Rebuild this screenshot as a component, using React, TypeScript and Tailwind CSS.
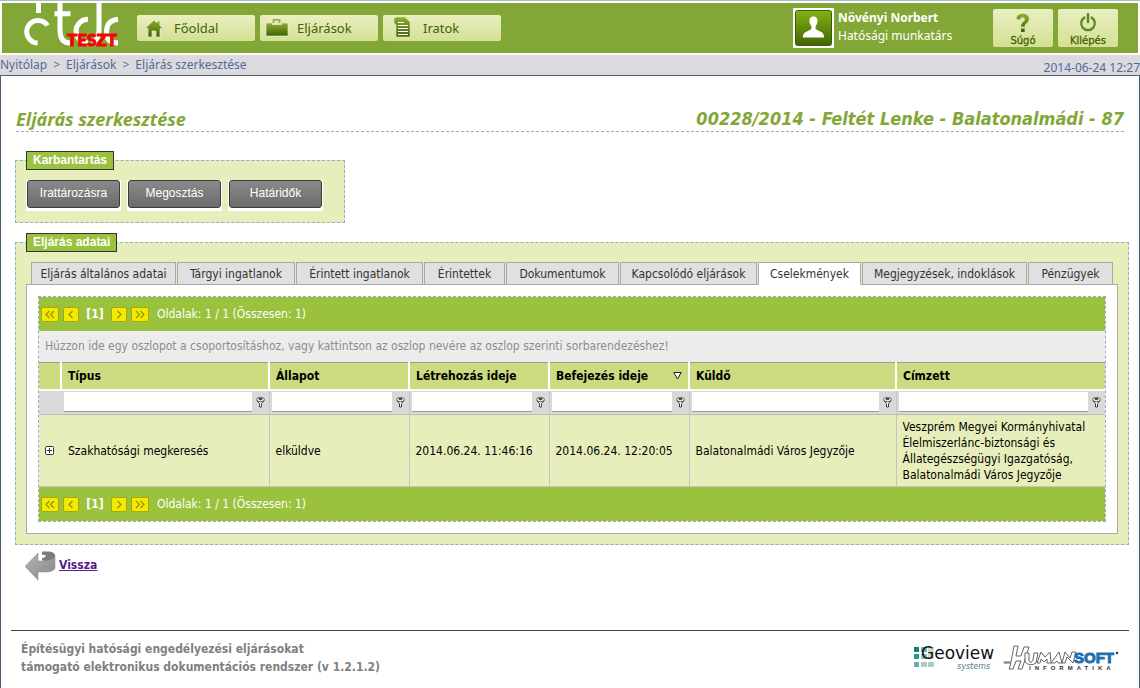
import clsx from 'clsx'
import type { ReactNode } from 'react'

const NAV_ITEMS = [
  { label: 'Főoldal', icon: <HomeIcon />, iconWidth: 'w-[34px]' },
  { label: 'Eljárások', icon: <BriefcaseIcon />, iconWidth: 'w-[34px]' },
  { label: 'Iratok', icon: <DocumentIcon />, iconWidth: 'w-[37px]' },
]

const TABS = [
  { label: 'Eljárás általános adatai', width: 'basis-[145px]' },
  { label: 'Tárgyi ingatlanok', width: 'basis-[118px]' },
  { label: 'Érintett ingatlanok', width: 'basis-[127px]' },
  { label: 'Érintettek', width: 'basis-[81px]' },
  { label: 'Dokumentumok', width: 'basis-[113px]' },
  { label: 'Kapcsolódó eljárások', width: 'basis-[137px]' },
  { label: 'Cselekmények', width: 'basis-[103px]', active: true },
  { label: 'Megjegyzések, indoklások', width: 'basis-[165px]' },
  { label: 'Pénzügyek', width: 'basis-[85px]' },
]

const COLUMNS = [
  { label: 'Típus', width: 'w-[208px]' },
  { label: 'Állapot', width: 'w-[140px]' },
  { label: 'Létrehozás ideje', width: 'w-[140px]' },
  { label: 'Befejezés ideje', width: 'w-[140px]', sorted: true },
  { label: 'Küldő', width: 'w-[207px]' },
  { label: 'Címzett', width: '' },
]

const ROW = [
  'Szakhatósági megkeresés',
  'elküldve',
  '2014.06.24. 11:46:16',
  '2014.06.24. 12:20:05',
  'Balatonalmádi Város Jegyzője',
  'Veszprém Megyei Kormányhivatal Élelmiszerlánc-biztonsági és Állategészségügyi Igazgatóság, Balatonalmádi Város Jegyzője',
]

function IconGradient({ id }: { id: string }) {
  return (
    <defs>
      <linearGradient id={id} x1="0" y1="0" x2="0" y2="1">
        <stop offset="0" stopColor="#8fae33" />
        <stop offset="1" stopColor="#3f6206" />
      </linearGradient>
    </defs>
  )
}

function HomeIcon() {
  return (
    <svg width="18" height="19" viewBox="0 0 18 19" aria-hidden="true">
      <IconGradient id="home" />
      <path
        d="M9 1 1 8.5 2.2 10 3 9.4V18h4v-6h4v6h4V9.4l.8.6L17 8.5l-2.2-2V2h-2.6v2z"
        fill="url(#home)"
        stroke="#f2f6d8"
        strokeWidth="0.6"
      />
    </svg>
  )
}

function BriefcaseIcon() {
  return (
    <svg width="24" height="19" viewBox="0 0 24 19" className="mb-[2px]" aria-hidden="true">
      <IconGradient id="briefcase" />
      <path d="M8.5 5V1.8h6V5" fill="none" stroke="#97b04a" strokeWidth="1.8" />
      <path
        d="M1 5h6.500v1.500h9V5H23v13H1z"
        fill="url(#briefcase)"
        stroke="#f2f6d8"
        strokeWidth="0.6"
      />
    </svg>
  )
}

function DocumentIcon() {
  return (
    <svg width="18" height="22" viewBox="0 0 18 22" className="mb-[2px]" aria-hidden="true">
      <IconGradient id="document" />
      <path d="M1 2 4 1h8l5 5v15H3V9L1 7z" fill="url(#document)" stroke="#dfe8b0" strokeWidth="0.6" />
      <path d="M5 6.500h6M5 9.500h10M5 12.500h10M5 15.500h10M5 18.500h10" stroke="#fff" strokeWidth="1.2" />
    </svg>
  )
}

function Logo() {
  return (
    <a href="#" className="relative block h-[50px] w-[100px] overflow-hidden" aria-label="Kezdőlap">
      <svg width="100" height="50" viewBox="1 0 100 50" fill="none" stroke="#fff" strokeWidth="5">
        <path d="M16.500 0v10" />
        <path d="M25.500 22.500A11.300 11.300 0 1 0 15.700 40" />
        <path d="M38 0v27q0 13 10 13M32.500 10.800h16" />
        <path d="M66 16.200A11.800 11.800 0 0 0 66 40" />
        <path d="M77 0v27q0 9-7 13" />
        <path d="M96 16.200q-11.500 1-11.500 12.800 0 11 11.500 11" />
      </svg>
      <span className="absolute top-[28px] left-[44px] font-['Lato'] text-[17px] leading-[18px] font-black text-[#f20505] [-webkit-text-stroke:1px_#f20505]">
        TESZT
      </span>
    </a>
  )
}

function Avatar() {
  return (
    <svg width="41" height="40" viewBox="0 0 41 40" aria-hidden="true">
      <defs>
        <linearGradient id="avatar" x1="0" y1="0" x2="0" y2="1">
          <stop offset="0" stopColor="#82b313" />
          <stop offset="1" stopColor="#426403" />
        </linearGradient>
      </defs>
      <rect width="41" height="40" rx="1" fill="#fff" />
      <rect x="2.500" y="2.500" width="36" height="35" rx="2" fill="url(#avatar)" stroke="#3d5c05" />
      <path
        d="M20.500 8.500c-3 0-4.300 2.200-4 5 .2 2.500 1.200 3.500 1.800 4.800.6 1.600.2 3-1.300 3.800-3.500 1.800-6.800 1.800-7.200 7.400h21.400c-.4-5.600-3.700-5.600-7.200-7.400-1.500-.8-1.900-2.200-1.300-3.800.6-1.300 1.600-2.300 1.800-4.800.3-2.800-1-5-4-5z"
        fill="#fff"
      />
    </svg>
  )
}

function HelpIcon() {
  return (
    <svg width="16" height="20" viewBox="0 0 16 20" aria-hidden="true">
      <IconGradient id="help" />
      <path
        d="M1.500 6C1.500 2.500 4 .8 7.500.8c4 0 6.500 2 6.500 5 0 4.200-4.300 4.400-4.300 8H6c0-5 3.800-4.800 3.800-7.600 0-1.300-1-2-2.300-2-1.400 0-2.200.8-2.300 2.500zM6 15.500h3.700V19H6z"
        fill="url(#help)"
      />
    </svg>
  )
}

function PowerIcon() {
  return (
    <svg width="18" height="19" viewBox="0 0 18 19" fill="none" stroke="#5e8220" aria-hidden="true">
      <path d="M5.500 4.500a6.800 6.800 0 1 0 7 0" strokeWidth="2.200" strokeLinecap="round" />
      <path d="M9 1v8" strokeWidth="2.400" strokeLinecap="round" />
    </svg>
  )
}

function FilterIcon() {
  return (
    <svg width="9" height="11" viewBox="0 0 9 11" aria-hidden="true">
      <path d="M.8 3.500 3.500 6.500v3.500h2V6.500l2.700-3" fill="#fff" stroke="#444" />
      <ellipse cx="4.500" cy="2.600" rx="3.900" ry="2.100" fill="#fff" stroke="#555" />
      <ellipse cx="4.500" cy="2.100" rx="2" ry="1.200" fill="#444" />
    </svg>
  )
}

function BackIcon() {
  return (
    <svg width="32" height="30" viewBox="0 0 32 30" aria-hidden="true">
      <defs>
        <linearGradient id="back" x1="0" y1="0" x2="1" y2="1">
          <stop offset="0" stopColor="#b5b5b5" />
          <stop offset="1" stopColor="#858585" />
        </linearGradient>
      </defs>
      <path d="M17 .5h5c5 0 8 1.500 8 4l-1 5-10 1-2-2V7c5 0 5-4 0-3z" fill="#7c7c7c" />
      <path
        d="M0 15.500 13 2v8h4c7 0 12-1.500 13-5.500V17c-1 3-5 4-9 4h-8v8z"
        fill="url(#back)"
        stroke="#8a8a8a"
        strokeWidth="0.5"
      />
    </svg>
  )
}

function GeoviewLogo() {
  return (
    <svg width="88" height="28" viewBox="0 0 88 28" role="img" aria-label="Geoview systems">
      <path d="M1 3h5v5H1z" fill="#12807a" />
      <path d="M1 10h5v5H1z" fill="#259a8c" />
      <path d="M8 10h6v5H8z" fill="#8cc5ba" />
      <path d="M8 3h6v5H8z" fill="#6fb5aa" />
      <path d="M15 3h6v12h-6z" fill="#c9e0c8" />
      <path d="M1 18h5v5H1z" fill="#6fa9ac" />
      <path d="M8 18h6v5H8zM15 18h6v5h-6z" fill="#aacfba" />
      <text x="8" y="15" fontFamily="DejaVu Sans" fontWeight="400" fontSize="17" fill="#111">
        Geoview
      </text>
      <text x="44" y="25" fontFamily="DejaVu Sans" fontWeight="400" fontStyle="italic" fontSize="8" fill="#55788c">
        systems
      </text>
    </svg>
  )
}

function HumansoftLogo() {
  return (
    <svg width="116" height="28" viewBox="0 0 116 28" role="img" aria-label="Humansoft Informatika">
      <g fill="#fff" stroke="#666" strokeWidth="1">
        <path d="M1 18h7l3-16h4l-2 10h5l3-9h5l-7 22h-4l3-8h-5l-3 8H6l2-6H1z" />
        <path d="M22 9h4v8q2 3 4-1l1-7h4l-2 10q-6 4-11-1z" />
        <path d="M34 19 38 8l4 5 5-5 1 11h-4v-4l-3 3-3-3-1 4z" />
        <path d="M48 19 56 8l3 11h-4l-1-2-2 2zM59 19l3-11 5 6 2-6h4l-3 11-6-6-2 6z" />
      </g>
      <text x="71" y="19" fontFamily="Liberation Sans" fontWeight="700" fontSize="15" fill="#1d6fb0" stroke="#1d6fb0">
        SOFT
      </text>
      <text x="26" y="26" fontFamily="Liberation Sans" fontWeight="700" fontSize="6" fill="#333" letterSpacing="4">
        INFORMATIKA
      </text>
      <circle cx="114" cy="9" r="1.200" fill="#333" />
    </svg>
  )
}

function HeaderButton({ label, icon }: { label: string; icon: ReactNode }) {
  return (
    <button
      type="button"
      className="flex h-[38px] w-[60px] flex-col items-center justify-between rounded-xs bg-linear-to-b from-[#e9efc0] to-[#d4e093] pt-1 font-['DejaVu_Sans'] text-[10px] leading-[13px] text-[#3f6206] [-webkit-text-stroke:0.3px_#3f6206]"
    >
      {icon}
      {label}
    </button>
  )
}

function Panel({ title, className, children }: { title: string; className?: string; children: ReactNode }) {
  return (
    <fieldset className={clsx('border border-dashed border-[#8fadc8] bg-[#e8eebb] px-[10px]', className)}>
      <legend className="border border-[#333] bg-[#9bc23f] px-1.5 font-['Liberation_Sans'] text-[12px] leading-[17px] font-bold text-white">
        {title}
      </legend>
      {children}
    </fieldset>
  )
}

function ActionButton({ children }: { children: ReactNode }) {
  return (
    <div className="bg-white px-px pb-[3px]">
      <button
        type="button"
        className="block h-[28px] w-[93px] rounded-[3px] border border-[#3c3c3c] bg-linear-to-b from-[#8a8a8a] to-[#6c6c6c] pb-[2px] font-['Liberation_Sans'] text-[12px] text-white"
      >
        {children}
      </button>
    </div>
  )
}

function PagerButton({ label, points, wide }: { label: string; points: string; wide?: boolean }) {
  return (
    <button
      type="button"
      aria-label={label}
      className={clsx(
        'flex h-[15px] items-center justify-center rounded-xs border border-[#ada700] bg-[#f2ea00]',
        wide ? 'w-[18px]' : 'w-[16px]',
      )}
    >
      <svg
        width="12"
        height="9"
        viewBox="0 0 12 9"
        fill="none"
        stroke="#948f00"
        strokeWidth="1.200"
        className="shrink-0"
        aria-hidden="true"
      >
        <path d={points} />
      </svg>
    </button>
  )
}

function Pager() {
  return (
    <div className="flex h-[34px] items-center bg-[#9bc23f] pl-[2px] text-[12px] text-white">
      <div className="flex items-center gap-1">
        <PagerButton wide label="Első oldal" points="M5.500 1l-3.500 3.500 3.500 3.500M10 1l-3.500 3.500 3.500 3.500" />
        <PagerButton label="Előző oldal" points="M7.500 1l-3.500 3.500 3.500 3.500" />
      </div>
      <span className="w-[32px] text-center font-bold">[1]</span>
      <div className="flex items-center gap-1">
        <PagerButton label="Következő oldal" points="M4.500 1l3.500 3.500-3.500 3.500" />
        <PagerButton wide label="Utolsó oldal" points="M2 1l3.500 3.500-3.500 3.500M6.500 1l3.500 3.500-3.500 3.500" />
      </div>
      <span className="ml-2">Oldalak: 1 / 1 (Összesen: 1)</span>
    </div>
  )
}

function ActionsTable() {
  return (
    <table className="w-full table-fixed border-collapse text-left text-[12px] leading-4 text-black">
      <thead>
        <tr className="h-[27px] border-t border-t-[#999] bg-[#cddb80]">
          <th className="w-[22px] border-b-2 border-b-white" aria-label="Részletek" />
          {COLUMNS.map((column) => (
            <th
              key={column.label}
              scope="col"
              className={clsx('border-b-2 border-l-2 border-b-white border-l-white px-1.5', column.width)}
            >
              <span className="flex items-center justify-between">
                {column.label}
                {column.sorted && (
                  <svg width="9" height="8" viewBox="0 0 9 8" fill="#fff" stroke="#222" aria-label="csökkenő">
                    <path d="M.8.5h7.400l-3.700 6.500z" />
                  </svg>
                )}
              </span>
            </th>
          ))}
        </tr>
        <tr className="h-[25px] border-b border-[#bbb] bg-[#d9d9d9]">
          <td />
          {COLUMNS.map((column, index) => (
            <td
              key={column.label}
              className={clsx('py-0 pr-1', index > 0 ? 'border-l border-[#c4c4c4] pl-[2px]' : 'pl-[3px]')}
            >
              <div className="flex items-center gap-1">
                <input
                  aria-label={`Szűrés: ${column.label}`}
                  className="h-5 w-full min-w-0 border-b border-[#999] bg-white px-1"
                />
                <button type="button" aria-label="Szűrő" className="shrink-0">
                  <FilterIcon />
                </button>
              </div>
            </td>
          ))}
        </tr>
      </thead>
      <tbody>
        <tr className="h-[72px] border-b border-[#c4c4c4] bg-[#e8eebb]">
          <td className="pl-1.5">
            <button type="button" aria-label="Kibontás" className="block">
              <svg width="9" height="9" viewBox="0 0 9 9" fill="#fff" stroke="#333" aria-hidden="true">
                <rect x=".5" y=".5" width="8" height="8" rx="1" />
                <path d="M2 4.500h5M4.500 2v5" />
              </svg>
            </button>
          </td>
          {ROW.map((value, index) => (
            <td key={value} className={clsx('pr-1', index > 0 ? 'border-l border-[#c4c4c4] pl-1.5' : 'pl-[7px]')}>
              {value}
            </td>
          ))}
        </tr>
      </tbody>
    </table>
  )
}

export default function App() {
  return (
    <div className="flex min-h-screen flex-col bg-white font-['DejaVu_Sans_Condensed','Noto_Sans',sans-serif]">
      <header className="border-t border-[#a9bccf] px-[2px] pt-[2px] pb-[2px]">
        <div className="flex h-[50px] items-center bg-[#83a736] pr-5 pl-[21px]">
          <Logo />
          <nav className="ml-[14px] flex gap-[5px]">
            {NAV_ITEMS.map((item) => (
              <a
                key={item.label}
                href="#"
                className="flex h-[26px] w-[118px] items-center rounded-xs bg-linear-to-b from-[#e9efc0] to-[#d4e093] font-['Noto_Sans'] text-[13px] text-[#3f6206]"
              >
                <span className={clsx('flex justify-center', item.iconWidth)}>{item.icon}</span>
                <span className="ml-[3px] pt-px">{item.label}</span>
              </a>
            ))}
          </nav>
          <div className="ml-auto flex items-center gap-1">
            <Avatar />
            <div className="w-[155px] pb-[3px] font-['Noto_Sans'] text-[12px] leading-[18px] text-white">
              <div className="font-bold">Növényi Norbert</div>
              <div>Hatósági munkatárs</div>
            </div>
          </div>
          <div className="flex gap-[5px]">
            <HeaderButton label="Súgó" icon={<HelpIcon />} />
            <HeaderButton label="Kilépés" icon={<PowerIcon />} />
          </div>
        </div>
      </header>

      <div className="flex h-5 justify-between bg-[#dcdadd] font-['Noto_Sans'] text-[12px] leading-5 text-[#4f6a9f]">
        <nav aria-label="Morzsamenü" className="flex gap-1.5">
          <a href="#">Nyitólap</a>
          <span>&gt;</span>
          <a href="#">Eljárások</a>
          <span>&gt;</span>
          <a href="#">Eljárás szerkesztése</a>
        </nav>
        <time className="pt-[3px]">2014-06-24 12:27</time>
      </div>

      <div className="flex grow flex-col border border-b-0 border-[#4a5f7a]">
        <main className="px-[14px] pt-[31px]">
          <div className="mx-px flex justify-between border-b border-dashed border-[#8fadc8] text-[18px] leading-6 font-bold text-[#83a736] italic">
            <h1 className="font-['Noto_Sans']">Eljárás szerkesztése</h1>
            <h2>00228/2014 - Feltét Lenke - Balatonalmádi - 87</h2>
          </div>

          <Panel title="Karbantartás" className="mt-[19px] w-[330px] pb-[11px]">
            <div className="mt-[10px] flex gap-1.5">
              <ActionButton>Irattározásra</ActionButton>
              <ActionButton>Megosztás</ActionButton>
              <ActionButton>Határidők</ActionButton>
            </div>
          </Panel>

          <Panel title="Eljárás adatai" className="mt-[10px] mr-[-4px] pb-[10px]">
            <div role="tablist" className="relative mt-[10px] flex gap-px px-[5px]">
              {TABS.map((tab) => (
                <button
                  key={tab.label}
                  type="button"
                  role="tab"
                  aria-selected={!!tab.active}
                  className={clsx(
                    'h-[23px] grow border border-[#a8a8a8] text-[12px] whitespace-nowrap text-[#333]',
                    tab.width,
                    tab.active ? 'border-b-white bg-white' : 'bg-[#e0e0e0]',
                  )}
                >
                  {tab.label}
                </button>
              ))}
            </div>
            <div role="tabpanel" className="-mt-px border border-[#a8a8a8] bg-white p-[11px]">
              <div className="border border-dashed border-[#8fadc8]">
                <Pager />
                <div className="h-[31px] bg-[#ececec] px-1.5 text-[12px] leading-[31px] text-[#8c8c8c]">
                  Húzzon ide egy oszlopot a csoportosításhoz, vagy kattintson az oszlop nevére az oszlop szerinti
                  sorbarendezéshez!
                </div>
                <ActionsTable />
                <Pager />
              </div>
            </div>
          </Panel>

          <a href="#" className="mt-[6px] ml-[10px] inline-flex items-center gap-[2px] text-[12px] font-bold text-[#551a8b]">
            <BackIcon />
            <span className="pb-[2px] underline">Vissza</span>
          </a>
        </main>

        <footer className="mx-[10px] mt-auto flex items-center justify-between border-t border-[#444] px-[10px] pt-[9px] pb-3 text-[12px] leading-[18px] font-bold text-[#808080]">
          <p>
            Építésügyi hatósági engedélyezési eljárásokat
            <br />
            támogató elektronikus dokumentációs rendszer (v 1.2.1.2)
          </p>
          <div className="flex gap-[2px]">
            <GeoviewLogo />
            <HumansoftLogo />
          </div>
        </footer>
      </div>
    </div>
  )
}
